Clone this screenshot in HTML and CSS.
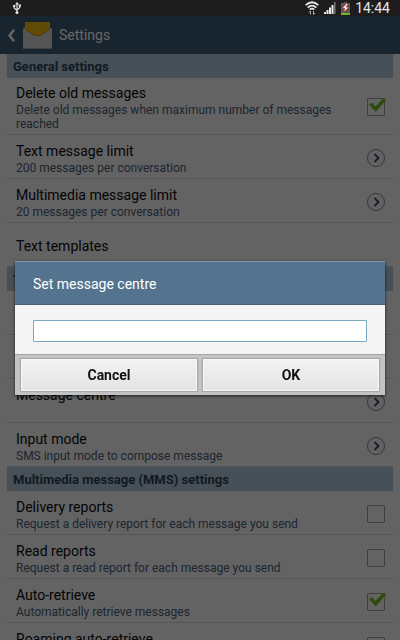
FILE: index.html
```html
<!DOCTYPE html>
<html lang="en">
  <head>
    <meta charset="UTF-8">
    <meta name="viewport" content="width=device-width, initial-scale=1.0">
    <title>Settings</title>
    <link rel="stylesheet" href="styles.css">
  </head>
  <body>
    <div class="status-bar">
      <svg class="usb-icon" width="8" height="12" viewBox="0 0 8 12" fill="none" stroke="#e0e0e0" stroke-width="1.200">
        <path d="M4 1v9M1.200 4v2L4 8.500M6.800 3.500v2L4 8"/>
        <path d="M4 0l2 2.500H2zM0 3h2.300v2H0zM5.700 2.500H8v2H5.700z" fill="#e0e0e0" stroke="none"/>
        <circle cx="4" cy="10.500" r="1.500" fill="#e0e0e0" stroke="none"/>
      </svg>
      <div class="status-right">
        <svg width="14" height="14" viewBox="0 0 14 14" fill="none" stroke="#e4e4e4" stroke-width="1.800">
          <path d="M.7 4.200Q7-1.600 13.300 4.200M2.700 6.600Q7 2.700 11.300 6.600M4.800 8.700Q7 6.600 9.200 8.700"/>
          <path d="M5.500 13.500V10M4 11.500L5.500 10M8.500 10v3.500M10 12l-1.500 1.500" stroke="#aaa" stroke-width="1"/>
        </svg>
        <svg width="12" height="12" viewBox="0 0 12 12" fill="#e8e8e8">
          <path d="M0 10h2v2H0zM2.500 8h2v4h-2zM5 5.500h2V12H5zM7.500 3h2v9h-2z"/>
          <path d="M10 0h1.500v12H10z" fill="#777"/>
        </svg>
        <svg width="9" height="13" viewBox="0 0 9 13">
          <path d="M3 0h3v1h3v12H0V1h3z" fill="#5b5555"/>
          <path d="M0 11h9v2H0z" fill="#72b52b"/>
          <path d="M5.500 1.500L1.500 6l2.500.5L2.500 10.500 7.500 5.500 5 5l2-3z" fill="#fff" stroke="#c43b2c" stroke-width=".7"/>
        </svg>
        <span class="clock">14:44</span>
      </div>
    </div>

    <div class="screen">
      <header class="action-bar">
        <a href="#" class="back" aria-label="Back">
          <svg width="7" height="13" viewBox="0 0 7 13" fill="none" stroke="#fff" stroke-width="2.400">
            <path d="M6 .7L1.600 6.500 6 12.300"/>
          </svg>
          <svg width="29" height="28" viewBox="0 0 29 28">
            <path d="M0 8L2 6.500h25L29 8v20H0z" fill="#d4d4d4"/>
            <path d="M2 1h25v7.500L17 14.500h-5L2 8.500z" fill="#f0b90f"/>
            <path d="M2 8.500l10 6h5l10-6" fill="none" stroke="#b98b08" stroke-width=".8"/>
            <path d="M0 27h29v1H0z" fill="#a5a5a5"/>
          </svg>
        </a>
        <h1>Settings</h1>
      </header>

      <main class="settings">
        <h2>General settings</h2>
        <label class="row">
          <span class="text">
            <span class="title">Delete old messages</span>
            <span class="summary">Delete old messages when maximum number of messages reached</span>
          </span>
          <input type="checkbox" checked>
        </label>
        <a href="#" class="row">
          <span class="text">
            <span class="title">Text message limit</span>
            <span class="summary">200 messages per conversation</span>
          </span>
          <svg class="more" viewBox="0 0 18 18"><circle cx="9" cy="9" r="8.500"/><path d="M7.500 5l4 4-4 4"/></svg>
        </a>
        <a href="#" class="row">
          <span class="text">
            <span class="title">Multimedia message limit</span>
            <span class="summary">20 messages per conversation</span>
          </span>
          <svg class="more" viewBox="0 0 18 18"><circle cx="9" cy="9" r="8.500"/><path d="M7.500 5l4 4-4 4"/></svg>
        </a>
        <a href="#" class="row">
          <span class="text">
            <span class="title">Text templates</span>
          </span>
        </a>

        <h2>Text message (SMS) settings</h2>
        <div class="row"></div>
        <div class="row"></div>
        <a href="#" class="row">
          <span class="text">
            <span class="title">Message centre</span>
            <span class="summary"></span>
          </span>
          <svg class="more" viewBox="0 0 18 18"><circle cx="9" cy="9" r="8.500"/><path d="M7.500 5l4 4-4 4"/></svg>
        </a>
        <a href="#" class="row">
          <span class="text">
            <span class="title">Input mode</span>
            <span class="summary">SMS input mode to compose message</span>
          </span>
          <svg class="more" viewBox="0 0 18 18"><circle cx="9" cy="9" r="8.500"/><path d="M7.500 5l4 4-4 4"/></svg>
        </a>

        <h2>Multimedia message (MMS) settings</h2>
        <label class="row">
          <span class="text">
            <span class="title">Delivery reports</span>
            <span class="summary">Request a delivery report for each message you send</span>
          </span>
          <input type="checkbox">
        </label>
        <label class="row">
          <span class="text">
            <span class="title">Read reports</span>
            <span class="summary">Request a read report for each message you send</span>
          </span>
          <input type="checkbox">
        </label>
        <label class="row">
          <span class="text">
            <span class="title">Auto-retrieve</span>
            <span class="summary">Automatically retrieve messages</span>
          </span>
          <input type="checkbox" checked>
        </label>
        <label class="row">
          <span class="text">
            <span class="title">Roaming auto-retrieve</span>
            <span class="summary"></span>
          </span>
          <input type="checkbox">
        </label>
      </main>
    </div>

    <div class="overlay">
      <form class="dialog" role="dialog" aria-labelledby="dialogTitle">
        <h2 class="dialog-title" id="dialogTitle">Set message centre</h2>
        <div class="dialog-body">
          <input type="text" class="field" aria-labelledby="dialogTitle">
        </div>
        <div class="dialog-buttons">
          <button type="button">Cancel</button>
          <button type="submit">OK</button>
        </div>
      </form>
    </div>
  </body>
</html>
```

FILE: styles.css
```css
:root {
  --bar-color: #3c5a73;
  --section-bg: #afc8d8;
  --section-text: #2c4258;
  --list-bg: #f7f7f7;
  --summary-text: #4b6078;
  --divider: #d8d8d8;
  --dialog-blue: #54738e;
}

* {
  margin: 0;
  padding: 0;
  box-sizing: border-box;
}

body {
  display: flex;
  flex-direction: column;
  height: 100vh;
  overflow: hidden;
  font-family: Roboto, sans-serif;
  background-color: var(--list-bg);
  color: #0a0a0a;
}

a {
  color: inherit;
  text-decoration: none;
}

.status-bar {
  flex: none;
  display: flex;
  align-items: center;
  justify-content: space-between;
  height: 16px;
  padding: 0 10px 0 13px;
  background-color: #1d1d1d;
}

.status-right {
  display: flex;
  align-items: center;
  gap: 5px;
}

.clock {
  color: #e6e6e6;
  font-size: 14px;
  line-height: 16px;
}

.screen {
  flex: 1;
  min-height: 0;
  overflow: hidden;
}

.action-bar {
  display: flex;
  align-items: center;
  height: 38px;
  padding: 0 8px;
  background-color: var(--bar-color);
}

.back {
  display: flex;
  align-items: center;
  gap: 8px;
  margin-right: 7px;
}

h1 {
  color: #fff;
  font-size: 14px;
  font-weight: 400;
}

.settings {
  padding: 0 7px;
}

.settings h2 {
  height: 24px;
  padding: 0 6px;
  background-color: var(--section-bg);
  color: var(--section-text);
  font-size: 13px;
  font-weight: 700;
  line-height: 26px;
}

.row {
  display: flex;
  align-items: center;
  justify-content: space-between;
  min-height: 44px;
  padding: 5px 8px 3px 9px;
  border-bottom: 1px solid var(--divider);
}

.text {
  display: flex;
  flex-direction: column;
  max-width: 320px;
}

.title {
  font-size: 14px;
  line-height: 20px;
}

.summary {
  min-height: 14px;
  color: var(--summary-text);
  font-size: 12px;
  line-height: 14px;
}

.more {
  flex: none;
  width: 18px;
  height: 18px;
  fill: none;
  stroke: #8c8c8c;
}

.more path {
  stroke: #4a4c74;
  stroke-width: 2;
}

input[type="checkbox"] {
  flex: none;
  position: relative;
  appearance: none;
  width: 18px;
  height: 18px;
  border: 1px solid #a0a0a0;
  border-radius: 1px;
}

input[type="checkbox"]:checked::before {
  content: "";
  position: absolute;
  top: -1px;
  left: 1px;
  width: 17px;
  height: 14px;
  background-color: #77b81a;
  clip-path: polygon(0 46%, 18% 34%, 38% 60%, 84% 0, 100% 14%, 40% 100%);
}

.overlay {
  position: fixed;
  top: 16px;
  right: 0;
  bottom: 0;
  left: 0;
  display: flex;
  align-items: center;
  justify-content: center;
  padding: 0 15px;
  background-color: rgba(0, 0, 0, 0.6);
}

.dialog {
  width: 100%;
  background-color: #f4f4f4;
  box-shadow: 0 1px 3px rgba(0, 0, 0, 0.7);
}

.dialog-title {
  height: 44px;
  padding: 0 18px;
  border-top: 1px solid #7f9bb0;
  border-bottom: 1px solid #45617a;
  background-color: var(--dialog-blue);
  color: #fff;
  font-size: 14px;
  font-weight: 400;
  line-height: 44px;
}

.dialog-body {
  display: flex;
  padding: 15px 18px 12px;
}

.field {
  width: 100%;
  height: 22px;
  padding: 0 4px;
  border: 1px solid #79a9c2;
  border-radius: 1px;
  outline: none;
  background-color: #fff;
  font-family: inherit;
  font-size: 14px;
}

.dialog-buttons {
  display: flex;
  gap: 6px;
  padding: 4px 6px;
  border-top: 1px solid #a5a5a5;
  background-color: #c4c4c4;
}

.dialog-buttons button {
  flex: 1;
  height: 32px;
  border: 1px solid #f8f8f8;
  background: linear-gradient(#f3f3f3, #e4e4e4);
  box-shadow: 0 0 1px 1px #a8a8a8;
  color: #111;
  font-family: inherit;
  font-size: 14px;
  font-weight: 700;
}
```
